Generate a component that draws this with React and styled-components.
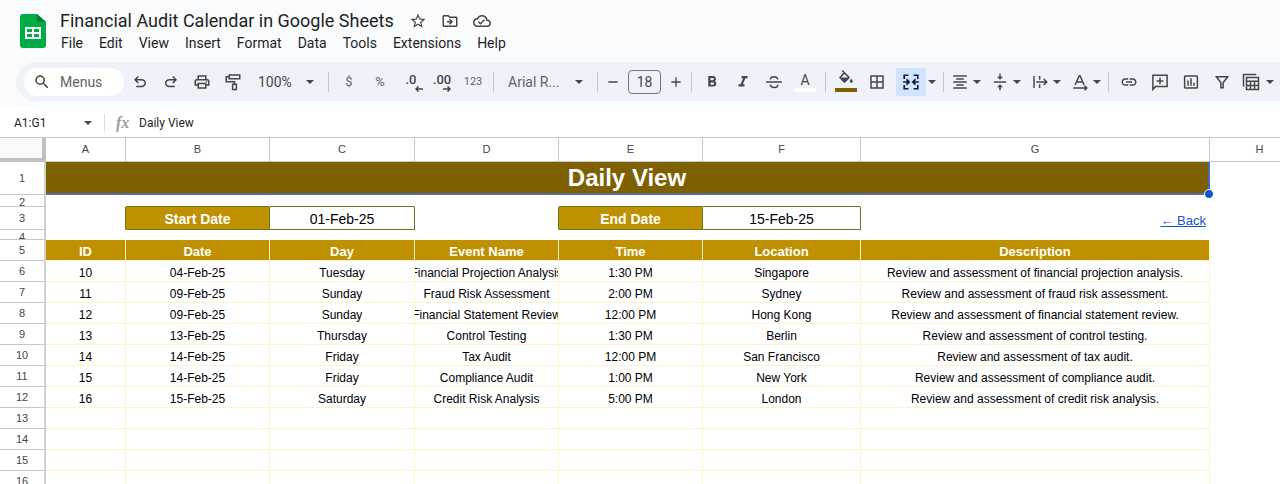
import React from "react";
import styled, { createGlobalStyle } from "styled-components";
import {
  MdStarBorder,
  MdOutlineDriveFileMove,
  MdOutlineCloudDone,
  MdSearch,
  MdOutlinePrint,
  MdFormatBold,
  MdFormatItalic,
  MdOutlineBorderAll,
  MdFormatAlignCenter,
  MdVerticalAlignCenter,
  MdLink,
  MdInsertChartOutlined,
  MdAdd,
  MdRemove,
} from "react-icons/md";

const ink = "#444746";
const softInk = "#5f6368";
const gold = "#bf9000";
const brown = "#7f6000";
const olive = "#6f7420";
const cream = "#fff2cc";
const line = "#c4c7c5";

const GlobalStyle = createGlobalStyle`
  *, *::before, *::after { box-sizing: border-box; }
  body { margin: 0; background: #fff; }
  button, input, select { font: inherit; color: inherit; border: 0; padding: 0; margin: 0; background: none; }
`;

const Page = styled.div`
  display: flex;
  flex-direction: column;
  height: 100vh;
  overflow: hidden;
  font-family: Roboto, "Liberation Sans", sans-serif;
  color: ${ink};
`;

const Chrome = styled.header`
  flex: none;
  background: #f9fbfd;
  padding-bottom: 7px;
`;

const TitleBar = styled.div`
  display: flex;
  align-items: flex-start;
  gap: 7px;
  height: 62px;
  padding: 10px 20px 0;
`;

const Logo = styled.svg`
  display: block;
  flex: none;
  width: 26px;
  height: 34px;
  margin-top: 4px;
`;

const TitleRow = styled.div`
  display: flex;
  align-items: center;
  height: 22px;
  padding-left: 7px;
`;

const DocTitle = styled.h1`
  margin: 0 8px 0 0;
  font-size: 18px;
  line-height: 22px;
  font-weight: 400;
  color: #1f1f1f;
  white-space: nowrap;
`;

const TitleButton = styled.button`
  display: flex;
  align-items: center;
  justify-content: center;
  width: 32px;
  height: 22px;
  font-size: 18px;
`;

const MenuBar = styled.nav`
  display: flex;
  height: 22px;
`;

const MenuButton = styled.button`
  padding: 0 8px;
  font-size: 14px;
  line-height: 22px;
  color: #1f1f1f;
`;

const Toolbar = styled.div`
  display: flex;
  align-items: center;
  gap: 1px;
  height: 39px;
  margin-left: 16px;
  padding-left: 8px;
  border-radius: 20px 0 0 20px;
  background: #eff3f9;
  overflow: hidden;
`;

const SearchPill = styled.label`
  display: flex;
  flex: none;
  align-items: center;
  gap: 9px;
  width: 100px;
  height: 28px;
  padding-left: 9px;
  border-radius: 14px;
  background: #fff;
  font-size: 14px;

  svg { flex: none; font-size: 18px; }
  input { width: 54px; outline: 0; }
  input::placeholder { color: ${softInk}; opacity: 1; }
`;

const Tool = styled.button`
  position: relative;
  display: flex;
  flex: none;
  align-items: center;
  justify-content: center;
  width: ${(p) => p.$w || 30}px;
  height: 28px;
  font-size: ${(p) => p.$size || 18}px;
  font-weight: ${(p) => (p.$strong ? 500 : 400)};
  color: ${(p) => (p.$on ? "#041e49" : p.$soft ? softInk : ink)};
  background: ${(p) => (p.$on ? "#d3e3fd" : "transparent")};
`;

const Arrow = styled.svg`
  display: block;
  flex: none;
  width: 8px;
  height: 4px;
  fill: ${ink};
`;

const Divider = styled.span`
  flex: none;
  width: 1px;
  height: 20px;
  margin: 0 4px;
  background: #c7c7c7;
`;

const SelectBox = styled.label`
  display: flex;
  flex: none;
  align-items: center;
  justify-content: space-between;
  width: ${(p) => p.$w}px;
  height: 28px;
  padding: 0 9px;
  font-size: 14px;
  color: ${(p) => (p.$soft ? softInk : ink)};

  select { appearance: none; outline: 0; }
`;

const SizeInput = styled.input`
  flex: none;
  width: 33px;
  height: 24px;
  margin: 0 4px;
  border: 1px solid #747775;
  border-radius: 4px;
  font-size: 14px;
  text-align: center;
`;

const SplitGroup = styled.div`
  display: flex;
  flex: none;
  gap: 6px;
  margin-left: ${(p) => (p.$spaced ? 3 : 0)}px;
`;

const Split = styled.div`
  display: flex;
  flex: none;
`;

const DecimalArrow = styled.svg`
  position: absolute;
  right: ${(p) => (p.$inset ? 6 : 3)}px;
  bottom: 4px;
  width: 8px;
  height: 6px;
`;

const Swatch = styled.span`
  position: absolute;
  left: 4px;
  right: 4px;
  bottom: 4px;
  height: 4px;
  background: ${(p) => p.$color};
`;

const Lifted = styled.span`
  display: flex;
  height: 28px;
  padding-top: 2px;
  line-height: 20px;
`;

const FormulaBar = styled.div`
  display: flex;
  flex: none;
  align-items: center;
  height: 29px;
  font-size: 12px;
  color: #1f1f1f;
`;

const NameBox = styled.label`
  display: flex;
  align-items: center;
  width: 104px;
  padding: 0 12px 0 14px;

  input { flex: 1; min-width: 0; outline: 0; }
`;

const Fx = styled.span`
  width: 34px;
  padding-left: 11px;
  font: italic 700 16px/18px "Liberation Serif", serif;
  color: #9aa0a6;
  border-left: 1px solid #dadce0;
`;

const FormulaInput = styled.input`
  flex: 1;
  padding-left: 1px;
  outline: 0;
`;

const SheetArea = styled.main`
  flex: 1;
  min-height: 0;
  overflow: hidden;
  border-top: 1px solid ${line};
  font-family: "Liberation Sans", Arial, sans-serif;
`;

const Grid = styled.table`
  table-layout: fixed;
  width: 100%;
  min-width: 1310px;
  border-collapse: separate;
  border-spacing: 0;
`;

const Corner = styled.td`
  height: 24px;
  padding: 0;
  background: #f8f9fa;
  border-right: 4px solid #c0c0c0;
  border-bottom: 4px solid #c0c0c0;
`;

const ColumnHead = styled.th`
  height: 24px;
  padding: 0 0 2px;
  border-right: 1px solid ${line};
  border-bottom: 1px solid ${line};
  font-size: 11px;
  font-weight: 400;
  color: ${ink};
`;

const RowHead = styled.th`
  padding: 0;
  border-right: 2px solid #d0d2d1;
  border-bottom: 1px solid ${line};
  font-size: 11px;
  font-weight: 400;
  color: ${ink};
`;

const Clip = styled.div`
  display: flex;
  align-items: safe center;
  justify-content: center;
  height: ${(p) => p.$h - 1}px;
  line-height: 14px;
  overflow: hidden;
`;

const Cell = styled.td`
  padding: 0;
  border-right: 1px solid ${(p) => p.$right || "transparent"};
  border-bottom: 1px solid ${(p) => p.$bottom || "transparent"};
  font-size: 12px;
  color: #000;
  white-space: nowrap;
`;

const CellText = styled.div`
  display: flex;
  align-items: center;
  justify-content: ${(p) => (p.$end ? "flex-end" : "center")};
  height: ${(p) => p.$h - 1}px;
  padding-top: ${(p) => (p.$low ? 4 : 2)}px;
  padding-right: ${(p) => (p.$end ? 3 : 0)}px;
  overflow: hidden;
`;

const TitleCell = styled.td`
  position: relative;
  height: 33px;
  padding: 0;
  background: ${brown};
  border-right: 2px solid #3c6cc0;
  border-bottom: 2px solid #53709c;
  font-size: 24px;
  font-weight: 700;
  color: #fff;
  text-align: center;
`;

const FillHandle = styled.span`
  position: absolute;
  right: -6px;
  bottom: -6px;
  width: 10px;
  height: 10px;
  border: 1px solid #fff;
  border-radius: 50%;
  background: #0b57d0;
`;

const FieldLabel = styled(Cell)`
  background: ${gold};
  color: #fff;
  font-size: 14px;
  font-weight: 700;
`;

const FieldValue = styled(Cell)`
  font-size: 14px;
`;

const HeadCell = styled(Cell).attrs({ as: "th", scope: "col" })`
  background: ${gold};
  background-clip: padding-box;
  color: #fff;
  font-size: 13px;
  font-weight: 700;
`;

const BackLink = styled.a`
  font-size: 13px;
  color: #1155cc;
`;

const Glyph = ({ children, size = 18, ...rest }) => (
  <svg width={size} height={size} viewBox="0 0 24 24" fill="currentColor" aria-hidden="true" {...rest}>
    {children}
  </svg>
);

const StrokeGlyph = ({ children, size = 18 }) => (
  <svg width={size} height={size} viewBox="0 0 24 24" fill="none" stroke="currentColor" strokeWidth="2" aria-hidden="true">
    {children}
  </svg>
);

const undoPath =
  "M7 19v-2h7.1q1.575 0 2.737-1T18 13.5 16.838 11 14.1 10H7.8l2.6 2.6L9 14 4 9l5-5 1.4 1.4L7.8 8h6.3q2.425 0 4.163 1.575T20 13.5t-1.737 3.925T14.1 19z";

const UndoIcon = () => <Glyph><path d={undoPath} /></Glyph>;
const RedoIcon = () => <Glyph><path d={undoPath} transform="matrix(-1 0 0 1 24 0)" /></Glyph>;

const PaintIcon = () => (
  <StrokeGlyph>
    <path d="M7 2.500h14v5H7zM7 5H3v6.500h11V15M11.500 15h5v7h-5z" />
  </StrokeGlyph>
);

const StrikeIcon = () => (
  <StrokeGlyph>
    <path d="M1.500 12h21M17 8.500C16.300 6 14.500 5 12 5 9 5 7.200 6.500 7.200 8.500M7 15.500C7.600 18 9.500 19.200 12 19.200c3 0 5-1.400 5-3.700" />
  </StrokeGlyph>
);

const FillIcon = () => (
  <Glyph>
    <path d="M16.560 8.940 7.620 0 6.210 1.410l2.380 2.380-5.150 5.150a1.490 1.490 0 0 0 0 2.120l5.500 5.500c.290.290.680.440 1.060.440s.770-.150 1.060-.440l5.500-5.500c.590-.580.590-1.530 0-2.120zM5.210 10 10 5.210 14.790 10zM19 11.500s-2 2.170-2 3.500c0 1.100.9 2 2 2s2-.9 2-2c0-1.330-2-3.500-2-3.500z" />
  </Glyph>
);

const MergeIcon = () => (
  <StrokeGlyph>
    <path d="M8.500 3H3v5M3 16v5h5.500M15.500 3H21v5M21 16v5h-5.500M1.500 12H8M22.500 12H16M6 8.500 9.500 12 6 15.500M18 8.500 14.500 12l3.500 3.500" strokeWidth="2.300" />
  </StrokeGlyph>
);

const WrapIcon = () => (
  <StrokeGlyph>
    <path d="M4 4v16M11.500 4v5M11.500 15v5M7 12h14M17 8l4 4-4 4" />
  </StrokeGlyph>
);

const RotateIcon = () => (
  <StrokeGlyph>
    <path d="M5.500 16 11 3.500h1L17.500 16M7.500 12h8M3 20h18M18 17l3 3-3 3" />
  </StrokeGlyph>
);

const CommentIcon = () => (
  <StrokeGlyph>
    <path d="M2.500 22V3h19v15H6zM12 6v9M7.500 10.500h9" />
  </StrokeGlyph>
);

const FilterIcon = () => (
  <StrokeGlyph>
    <path d="M4.500 5h15L13.500 13v6.500h-3V13z" />
  </StrokeGlyph>
);

const TableIcon = () => (
  <StrokeGlyph>
    <path d="M2 18V2h17M6 6h16v16H6zM6 11h16M6 16.500h16M11.300 11v11M16.700 11v11" />
  </StrokeGlyph>
);

const Caret = () => <Arrow viewBox="0 0 8 4" aria-hidden="true"><path d="M0 0h8L4 4z" /></Arrow>;

const SplitTool = ({ label, w = 22, on, children }) => (
  <Split>
    <Tool $w={w} $on={on} aria-label={label}>{children}</Tool>
    <Tool $w={12} aria-label={`${label} options`}><Caret /></Tool>
  </Split>
);

const menus = ["File", "Edit", "View", "Insert", "Format", "Data", "Tools", "Extensions", "Help"];
const columns = [["A", 80], ["B", 144], ["C", 145], ["D", 144], ["E", 144], ["F", 158], ["G", 349]];
const headings = ["ID", "Date", "Day", "Event Name", "Time", "Location", "Description"];
const events = [
  ["10", "04-Feb-25", "Tuesday", "Financial Projection Analysis", "1:30 PM", "Singapore", "Review and assessment of financial projection analysis."],
  ["11", "09-Feb-25", "Sunday", "Fraud Risk Assessment", "2:00 PM", "Sydney", "Review and assessment of fraud risk assessment."],
  ["12", "09-Feb-25", "Sunday", "Financial Statement Review", "12:00 PM", "Hong Kong", "Review and assessment of financial statement review."],
  ["13", "13-Feb-25", "Thursday", "Control Testing", "1:30 PM", "Berlin", "Review and assessment of control testing."],
  ["14", "14-Feb-25", "Friday", "Tax Audit", "12:00 PM", "San Francisco", "Review and assessment of tax audit."],
  ["15", "14-Feb-25", "Friday", "Compliance Audit", "1:00 PM", "New York", "Review and assessment of compliance audit."],
  ["16", "15-Feb-25", "Saturday", "Credit Risk Analysis", "5:00 PM", "London", "Review and assessment of credit risk analysis."],
];
const blankRow = ["", "", "", "", "", "", ""];
const bodyRows = [...events, blankRow, blankRow, blankRow, blankRow];

const RowNumber = ({ n, h = 21 }) => (
  <RowHead scope="row"><Clip $h={h}>{n}</Clip></RowHead>
);

const TopBar = () => (
  <TitleBar>
    <Logo viewBox="0 0 26 34" aria-hidden="true">
      <path d="M3 0h14l9 8v23a3 3 0 0 1-3 3H3a3 3 0 0 1-3-3V3a3 3 0 0 1 3-3z" fill="#00ac47" />
      <path d="M17 0l9 8h-9z" fill="#00832d" />
      <path d="M5 13h16v12H5zM7 15v3h5v-3zM14 15v3h5v-3zM7 20v3h5v-3zM14 20v3h5v-3z" fill="#fff" fillRule="evenodd" />
    </Logo>
    <div>
      <TitleRow>
        <DocTitle>Financial Audit Calendar in Google Sheets</DocTitle>
        <TitleButton aria-label="Star"><MdStarBorder /></TitleButton>
        <TitleButton aria-label="Move"><MdOutlineDriveFileMove /></TitleButton>
        <TitleButton aria-label="Saved to Drive"><MdOutlineCloudDone /></TitleButton>
      </TitleRow>
      <MenuBar>{menus.map((m) => <MenuButton key={m}>{m}</MenuButton>)}</MenuBar>
    </div>
  </TitleBar>
);

const Tools = () => (
  <Toolbar>
    <SearchPill>
      <MdSearch />
      <input placeholder="Menus" aria-label="Search the menus" />
    </SearchPill>
    <Tool aria-label="Undo"><UndoIcon /></Tool>
    <Tool aria-label="Redo"><RedoIcon /></Tool>
    <Tool aria-label="Print"><MdOutlinePrint /></Tool>
    <Tool aria-label="Paint format"><PaintIcon /></Tool>
    <SelectBox $w={74}>
      <select aria-label="Zoom"><option>100%</option></select>
      <Caret />
    </SelectBox>
    <Divider />
    <Tool $size={13} $soft aria-label="Currency">$</Tool>
    <Tool $size={13} $soft aria-label="Percent">%</Tool>
    <Tool $size={13} $strong aria-label="Decrease decimal places">
      <Lifted>.0</Lifted>
      <DecimalArrow viewBox="0 0 8 6" fill="none" stroke={ink} strokeWidth="1.500"><path d="M8 3H1M3.500 .500L1 3l2.500 2.500" /></DecimalArrow>
    </Tool>
    <Tool $size={13} $strong aria-label="Increase decimal places">
      <Lifted>.00</Lifted>
      <DecimalArrow $inset viewBox="0 0 8 6" fill="none" stroke={ink} strokeWidth="1.500"><path d="M0 3h7M4.500 .500L7 3 4.500 5.500" /></DecimalArrow>
    </Tool>
    <Tool $size={11} $soft aria-label="More formats">123</Tool>
    <Divider />
    <SelectBox $w={93} $soft>
      <select aria-label="Font"><option>Arial R...</option></select>
      <Caret />
    </SelectBox>
    <Divider />
    <Tool $w={20} $size={16} aria-label="Decrease font size"><MdRemove /></Tool>
    <SizeInput defaultValue="18" aria-label="Font size" />
    <Tool $w={20} $size={16} aria-label="Increase font size"><MdAdd /></Tool>
    <Divider />
    <Tool aria-label="Bold"><MdFormatBold /></Tool>
    <Tool aria-label="Italic"><MdFormatItalic /></Tool>
    <Tool aria-label="Strikethrough"><StrikeIcon /></Tool>
    <Tool $size={14} aria-label="Text color"><Lifted>A</Lifted><Swatch $color="#fff" /></Tool>
    <Divider />
    <Tool aria-label="Fill color"><Lifted><FillIcon /></Lifted><Swatch $color={brown} /></Tool>
    <Tool aria-label="Borders"><MdOutlineBorderAll /></Tool>
    <SplitGroup $spaced><SplitTool label="Merge cells" w={30} on><MergeIcon /></SplitTool></SplitGroup>
    <Divider />
    <SplitGroup>
      <SplitTool label="Horizontal align"><MdFormatAlignCenter /></SplitTool>
      <SplitTool label="Vertical align"><MdVerticalAlignCenter /></SplitTool>
      <SplitTool label="Text wrapping"><WrapIcon /></SplitTool>
      <SplitTool label="Text rotation"><RotateIcon /></SplitTool>
    </SplitGroup>
    <Divider />
    <Tool aria-label="Insert link"><MdLink /></Tool>
    <Tool aria-label="Insert comment"><CommentIcon /></Tool>
    <Tool aria-label="Insert chart"><MdInsertChartOutlined /></Tool>
    <Tool aria-label="Create a filter"><FilterIcon /></Tool>
    <SplitTool label="Table views" w={26}><TableIcon /></SplitTool>
  </Toolbar>
);

const Sheet = () => (
  <SheetArea>
    <Grid>
      <colgroup>
        <col style={{ width: 46 }} />
        {columns.map(([name, width]) => <col key={name} style={{ width }} />)}
        <col />
      </colgroup>
      <thead>
        <tr>
          <Corner />
          {columns.map(([name]) => <ColumnHead key={name} scope="col">{name}</ColumnHead>)}
          <ColumnHead scope="col">H</ColumnHead>
        </tr>
      </thead>
      <tbody>
        <tr>
          <RowNumber n={1} h={33} />
          <TitleCell colSpan={7}>Daily View<FillHandle /></TitleCell>
          <Cell />
        </tr>
        <tr>
          <RowNumber n={2} h={12} />
          <Cell />
          <Cell $bottom={olive} />
          <Cell $bottom={olive} />
          <Cell />
          <Cell $bottom={olive} />
          <Cell $bottom={olive} />
          <Cell />
          <Cell />
        </tr>
        <tr>
          <RowNumber n={3} h={23} />
          <Cell $right={olive} />
          <FieldLabel $right={olive} $bottom={olive}><CellText $h={23}>Start Date</CellText></FieldLabel>
          <FieldValue $right={olive} $bottom={olive}><CellText $h={23}>01-Feb-25</CellText></FieldValue>
          <Cell $right={olive} />
          <FieldLabel $right={olive} $bottom={olive}><CellText $h={23}>End Date</CellText></FieldLabel>
          <FieldValue $right={olive} $bottom={olive}><CellText $h={23}>15-Feb-25</CellText></FieldValue>
          <Cell><CellText $h={23} $end $low><BackLink href="#home">← Back</BackLink></CellText></Cell>
          <Cell />
        </tr>
        <tr>
          <RowNumber n={4} h={10} />
          <Cell colSpan={8} />
        </tr>
        <tr>
          <RowNumber n={5} />
          {headings.map((h) => (
            <HeadCell key={h} $right={cream} $bottom={cream}><CellText $h={21}>{h}</CellText></HeadCell>
          ))}
          <Cell />
        </tr>
        {bodyRows.map((row, i) => (
          <tr key={i}>
            <RowNumber n={i + 6} />
            {row.map((value, c) => (
              <Cell key={c} $right={cream} $bottom={cream}><CellText $h={21} $low>{value}</CellText></Cell>
            ))}
            <Cell />
          </tr>
        ))}
      </tbody>
    </Grid>
  </SheetArea>
);

export default function App() {
  return (
    <Page>
      <GlobalStyle />
      <Chrome>
        <TopBar />
        <Tools />
      </Chrome>
      <FormulaBar>
        <NameBox>
          <input defaultValue="A1:G1" aria-label="Name box" />
          <Caret />
        </NameBox>
        <Fx>fx</Fx>
        <FormulaInput defaultValue="Daily View" aria-label="Formula" />
      </FormulaBar>
      <Sheet />
    </Page>
  );
}
